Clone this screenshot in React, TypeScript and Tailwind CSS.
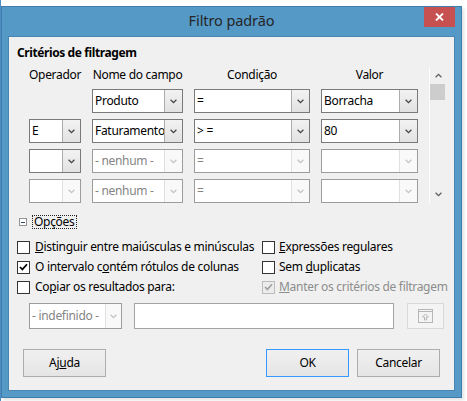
import React from "react";
import clsx from "clsx";

const Chevron = ({ color }: { color: string }) => (
  <svg width="7" height="5" viewBox="0 0 7 5">
    <path d="M0.6 0.8 L3.5 3.7 L6.4 0.8" fill="none" stroke={color} strokeWidth="1.3" />
  </svg>
);

type ComboProps = {
  wClass: string;
  text?: string;
  textDisabled?: boolean;
  btnDisabled?: boolean;
  hClass?: string;
  btnClass?: string;
};

function Combo({
  wClass,
  text = "",
  textDisabled = false,
  btnDisabled = false,
  hClass = "h-[24px]",
  btnClass = "w-[18px]",
}: ComboProps) {
  return (
    <div
      className={clsx(
        "flex shrink-0 bg-white border",
        wClass,
        hClass,
        textDisabled ? "border-[#9c9c9c]" : "border-[#7a7a7a]"
      )}
    >
      <div
        className={clsx(
          "flex-1 flex items-center pl-[2px] overflow-hidden whitespace-nowrap",
          textDisabled ? "text-[#858585]" : "text-black"
        )}
      >
        {text}
      </div>
      <div
        className={clsx(
          "flex items-center justify-center border-l shrink-0",
          btnClass,
          btnDisabled
            ? "border-[#e0e0e0] bg-[#f9f9f9]"
            : "border-[#acacac] bg-gradient-to-b from-[#f2f2f2] to-[#e2e2e2]"
        )}
      >
        <Chevron color={btnDisabled ? "#c4c4c4" : "#454545"} />
      </div>
    </div>
  );
}

function Check({ checked = false, disabled = false }: { checked?: boolean; disabled?: boolean }) {
  return (
    <span
      className={clsx(
        "w-[13px] h-[13px] border flex items-center justify-center shrink-0",
        disabled ? "border-[#bcbcbc] bg-[#ececec]" : "border-[#333333] bg-white"
      )}
    >
      {checked && (
        <svg width="9" height="8" viewBox="0 0 9 8">
          <path
            d="M1 4 L3.4 6.4 L8 1.2"
            fill="none"
            stroke={disabled ? "#a2a2a2" : "#000"}
            strokeWidth="1.7"
          />
        </svg>
      )}
    </span>
  );
}

function Btn({ children, def = false }: { children: React.ReactNode; def?: boolean }) {
  return (
    <div
      className={clsx(
        "w-[83px] h-[28px] border flex items-center justify-center bg-gradient-to-b from-[#f0f0f0] to-[#e5e5e5]",
        def ? "border-[#3399ff]" : "border-[#adadad]"
      )}
    >
      {children}
    </div>
  );
}

export default function App() {
  return (
    <div className="w-[467px] h-[401px] bg-white overflow-hidden flex font-['Noto_Sans','Open_Sans',sans-serif]">
      <div className="w-px h-full bg-[#4c8ec1] shrink-0" />
      <div className="pt-[6px]">
        <div className="w-[461px] h-[392px] border border-[#3f7dad] bg-[#5599c7] flex flex-col shadow-[2px_2px_3px_rgba(0,0,0,0.12)]">
          {/* Title bar */}
          <div className="relative h-[29px] flex items-center justify-center text-[14.5px] tracking-[-0.1px] text-[#262626] pb-[1px]">
            Filtro padrão
            <div className="absolute right-[6px] top-0 w-[31px] h-[20px] bg-[#c75050] flex items-center justify-center">
              <svg width="9" height="8" viewBox="0 0 9 8">
                <path d="M1 0.5 L8 7.5 M8 0.5 L1 7.5" stroke="#fff" strokeWidth="1.8" />
              </svg>
            </div>
          </div>
          {/* Client */}
          <div className="ml-[6px] w-[447px] h-[355px] bg-[#f0f0f0] border border-[#4a86b4] flex flex-col text-[12px] tracking-[-0.3px] leading-[16px] text-black">
            <div className="pt-[8px] pl-[8px] font-bold tracking-[-0.4px] h-[30px]">Critérios de filtragem</div>
            {/* Table */}
            <div className="flex h-[136px]">
              <div className="pl-[20px] flex flex-col gap-[6px]">
                <div className="flex gap-[11px] h-[16px]">
                  <div className="w-[52px] text-center whitespace-nowrap">Operador</div>
                  <div className="w-[91px] text-center whitespace-nowrap">Nome do campo</div>
                  <div className="w-[116px] text-center">Condição</div>
                  <div className="w-[97px] text-center">Valor</div>
                </div>
                <div className="flex gap-[11px]">
                  <div className="w-[52px] shrink-0" />
                  <Combo wClass="w-[91px]" text="Produto" />
                  <Combo wClass="w-[116px]" text="=" />
                  <Combo wClass="w-[97px]" text="Borracha" />
                </div>
                <div className="flex gap-[11px]">
                  <Combo wClass="w-[52px]" text="E" />
                  <Combo wClass="w-[91px]" text="Faturamento" />
                  <Combo wClass="w-[116px]" text="> =" />
                  <Combo wClass="w-[97px]" text="80" />
                </div>
                <div className="flex gap-[11px]">
                  <Combo wClass="w-[52px]" />
                  <Combo wClass="w-[91px]" text="- nenhum -" textDisabled btnDisabled />
                  <Combo wClass="w-[116px]" text="=" textDisabled btnDisabled />
                  <Combo wClass="w-[97px]" textDisabled btnDisabled />
                </div>
                <div className="flex gap-[11px]">
                  <Combo wClass="w-[52px]" textDisabled btnDisabled />
                  <Combo wClass="w-[91px]" text="- nenhum -" textDisabled btnDisabled />
                  <Combo wClass="w-[116px]" text="=" textDisabled btnDisabled />
                  <Combo wClass="w-[97px]" textDisabled btnDisabled />
                </div>
              </div>
              {/* Scrollbar */}
              <div className="ml-[11px] w-[17px] border-l border-white flex flex-col">
                <div className="h-[17px] flex items-center justify-center">
                  <svg width="7" height="5" viewBox="0 0 7 5">
                    <path d="M0.6 4.2 L3.5 1.3 L6.4 4.2" fill="none" stroke="#606060" strokeWidth="1.3" />
                  </svg>
                </div>
                <div className="h-[16px] w-[15px] bg-[#cdcdcd]" />
                <div className="flex-1" />
                <div className="h-[17px] flex items-center justify-center">
                  <Chevron color="#606060" />
                </div>
              </div>
            </div>
            {/* Options */}
            <div className="mt-[12px] h-[14px] pl-[10px] flex items-center">
              <div className="w-[8px] h-[8px] border border-[#939393] bg-white flex items-center justify-center">
                <div className="w-[4px] h-px bg-[#2b4a70]" />
              </div>
              <div className="ml-[5px] h-[14px] px-[1px] border border-dotted border-[#222] flex items-center">
                Opções
              </div>
            </div>
            <div className="mt-[8px] pl-[8px] grid grid-cols-[245px_auto]">
              <div className="h-[20px] flex items-center gap-[5px] whitespace-nowrap">
                <Check />
                <span>
                  <span className="underline">D</span>istinguir entre maiúsculas e minúsculas
                </span>
              </div>
              <div className="h-[20px] flex items-center gap-[4px] whitespace-nowrap">
                <Check />
                <span>
                  <span className="underline">E</span>xpressões regulares
                </span>
              </div>
              <div className="h-[20px] flex items-center gap-[5px] whitespace-nowrap">
                <Check checked />
                <span>
                  O intervalo c<span className="underline">o</span>ntém rótulos de colunas
                </span>
              </div>
              <div className="h-[20px] flex items-center gap-[4px] whitespace-nowrap">
                <Check />
                <span>
                  Sem <span className="underline">d</span>uplicatas
                </span>
              </div>
              <div className="h-[20px] flex items-center gap-[5px] whitespace-nowrap">
                <Check />
                <span>
                  Co<span className="underline">p</span>iar os resultados para:
                </span>
              </div>
              <div className="h-[20px] flex items-center gap-[4px] whitespace-nowrap text-[#8d8d8d]">
                <Check checked disabled />
                <span>
                  <span className="underline">M</span>anter os critérios de filtragem
                </span>
              </div>
            </div>
            {/* Copy target row */}
            <div className="mt-[6px] h-[26px] pl-[20px] flex">
              <Combo
                wClass="w-[93px]"
                hClass="h-[26px]"
                btnClass="w-[16px]"
                text="- indefinido -"
                textDisabled
                btnDisabled
              />
              <div className="ml-[12px] w-[260px] h-[26px] bg-white border border-[#a3a3a3]" />
              <div className="ml-[13px] w-[37px] h-[26px] border border-[#d9d9d9] bg-[#f4f4f4] flex items-center justify-center">
                <svg width="15" height="14" viewBox="0 0 15 14" fill="none" stroke="#b6b6b6">
                  <rect x="0.5" y="0.5" width="14" height="13" />
                  <line x1="0.5" y1="2.5" x2="14.5" y2="2.5" />
                  <path d="M7.5 5 L4.5 8 H6.5 V11 H8.5 V8 H10.5 Z" />
                </svg>
              </div>
            </div>
            {/* Buttons */}
            <div className="mt-[20px] pl-[14px] flex">
              <Btn>
                <span>
                  Aj<span className="underline">u</span>da
                </span>
              </Btn>
              <div className="ml-[160px]">
                <Btn def>OK</Btn>
              </div>
              <div className="ml-[8px]">
                <Btn>Cancelar</Btn>
              </div>
            </div>
          </div>
        </div>
      </div>
    </div>
  );
}
